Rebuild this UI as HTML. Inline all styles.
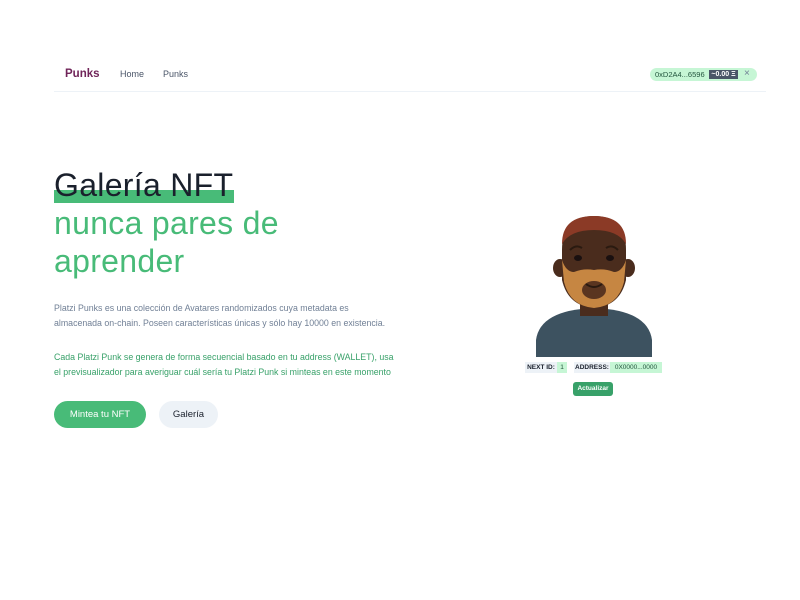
<!DOCTYPE html>
<html><head><meta charset="utf-8"><style>
body{margin:0;width:800px;height:600px;background:#fff;font-family:"Liberation Sans",sans-serif;position:relative;overflow:hidden}
.a{position:absolute;white-space:nowrap}
</style></head><body>
<div class="a" style="left:65px;top:68px;font-weight:bold;font-size:11.5px;color:#702459">Punks</div>
<div class="a" style="left:120px;top:69px;font-size:9px;color:#4a5568">Home</div>
<div class="a" style="left:163px;top:69px;font-size:9px;color:#4a5568">Punks</div>
<div class="a" style="left:54px;top:91px;width:712px;height:1px;background:#edf2f7"></div>
<div class="a" style="left:650px;top:68px;width:107px;height:13px;border-radius:7px;background:#c6f6d5"></div>
<div class="a" style="left:655px;top:69.5px;font-size:7.5px;color:#22543d">0xD2A4...6596</div>
<div class="a" style="left:709px;top:70px;width:29px;height:9px;background:#4a5568;color:#fff;font-size:7px;font-weight:bold;line-height:9px;text-align:center">~0.00 Ξ</div>
<div class="a" style="left:744px;top:68px;font-size:10px;color:#718096">×</div>

<div class="a" style="left:54px;top:190px;width:180px;height:13px;background:#48bb78"></div>
<div class="a" style="left:54px;top:166px;font-size:32px;letter-spacing:0.3px;line-height:38px;color:#1a202c">Galería NFT</div>
<div class="a" style="left:54px;top:204px;font-size:32px;letter-spacing:0.3px;line-height:38px;color:#48bb78">nunca pares de<br>aprender</div>
<div class="a" style="left:54px;top:301px;font-size:8.8px;line-height:14.5px;color:#718096">Platzi Punks es una colección de Avatares randomizados cuya metadata es<br>almacenada on-chain. Poseen características únicas y sólo hay 10000 en existencia.</div>
<div class="a" style="left:54px;top:350px;font-size:8.8px;line-height:14.5px;color:#38a169">Cada Platzi Punk se genera de forma secuencial basado en tu address (WALLET), usa<br>el previsualizador para averiguar cuál sería tu Platzi Punk si minteas en este momento</div>
<div class="a" style="left:54px;top:401px;width:92px;height:27px;border-radius:14px;background:#48bb78;color:#fff;font-size:9.5px;line-height:27px;text-align:center">Mintea tu NFT</div>
<div class="a" style="left:159px;top:401px;width:59px;height:27px;border-radius:14px;background:#edf2f7;color:#1a202c;font-size:9.5px;line-height:27px;text-align:center">Galería</div>

<svg class="a" style="left:530px;top:210px" width="130" height="150" viewBox="0 0 130 150">
<path d="M6 147 L6 130 Q10 100 64 98 Q118 100 122 130 L122 147Z" fill="#3d5260"/>
<rect x="50" y="78" width="28" height="28" fill="#4a2c1d"/>
<ellipse cx="30" cy="58" rx="7" ry="9" fill="#4a2c1d"/>
<ellipse cx="98" cy="58" rx="7" ry="9" fill="#4a2c1d"/>
<path d="M32 40 Q32 6 64 6 Q96 6 96 40 L96 70 Q90 96 64 98 Q38 96 32 70Z" fill="#4a2c1d"/>
<path d="M32 34 Q32 6 64 6 Q96 6 96 34 Q88 20 64 20 Q40 20 32 34Z" fill="#8b3a26"/>
<path d="M32 50 L34 72 Q40 96 64 98 Q88 96 94 72 L96 50 Q92 62 84 62 Q74 58 64 60 Q54 58 44 62 Q36 62 32 50Z" fill="#c68642"/>
<ellipse cx="64" cy="80" rx="12" ry="9" fill="#5a3520"/>
<path d="M56 74 Q64 80 72 74" stroke="#2a1a10" stroke-width="2" fill="none"/>
<path d="M40 40 Q46 34 52 38 M76 38 Q82 34 88 40" stroke="#2a1a10" stroke-width="2" fill="none"/>
<ellipse cx="48" cy="48" rx="4" ry="3" fill="#1a1010"/>
<ellipse cx="80" cy="48" rx="4" ry="3" fill="#1a1010"/>
</svg>
<div class="a" style="left:525px;top:362px;width:32px;height:11px;background:#edf2f7;font-size:6.5px;font-weight:bold;line-height:11px;text-align:center;color:#1a202c">NEXT ID:</div>
<div class="a" style="left:557px;top:362px;width:10px;height:11px;background:#c6f6d5;font-size:6.5px;line-height:11px;text-align:center;color:#22543d">1</div>
<div class="a" style="left:574px;top:362px;width:36px;height:11px;background:#edf2f7;font-size:6.5px;font-weight:bold;line-height:11px;text-align:center;color:#1a202c">ADDRESS:</div>
<div class="a" style="left:610px;top:362px;width:52px;height:11px;background:#c6f6d5;font-size:6.5px;line-height:11px;text-align:center;color:#22543d">0X0000...0000</div>
<div class="a" style="left:573px;top:382px;width:40px;height:14px;border-radius:3px;background:#38a169;color:#fff;font-size:6.5px;font-weight:bold;line-height:14px;text-align:center">Actualizar</div>
</body></html>
